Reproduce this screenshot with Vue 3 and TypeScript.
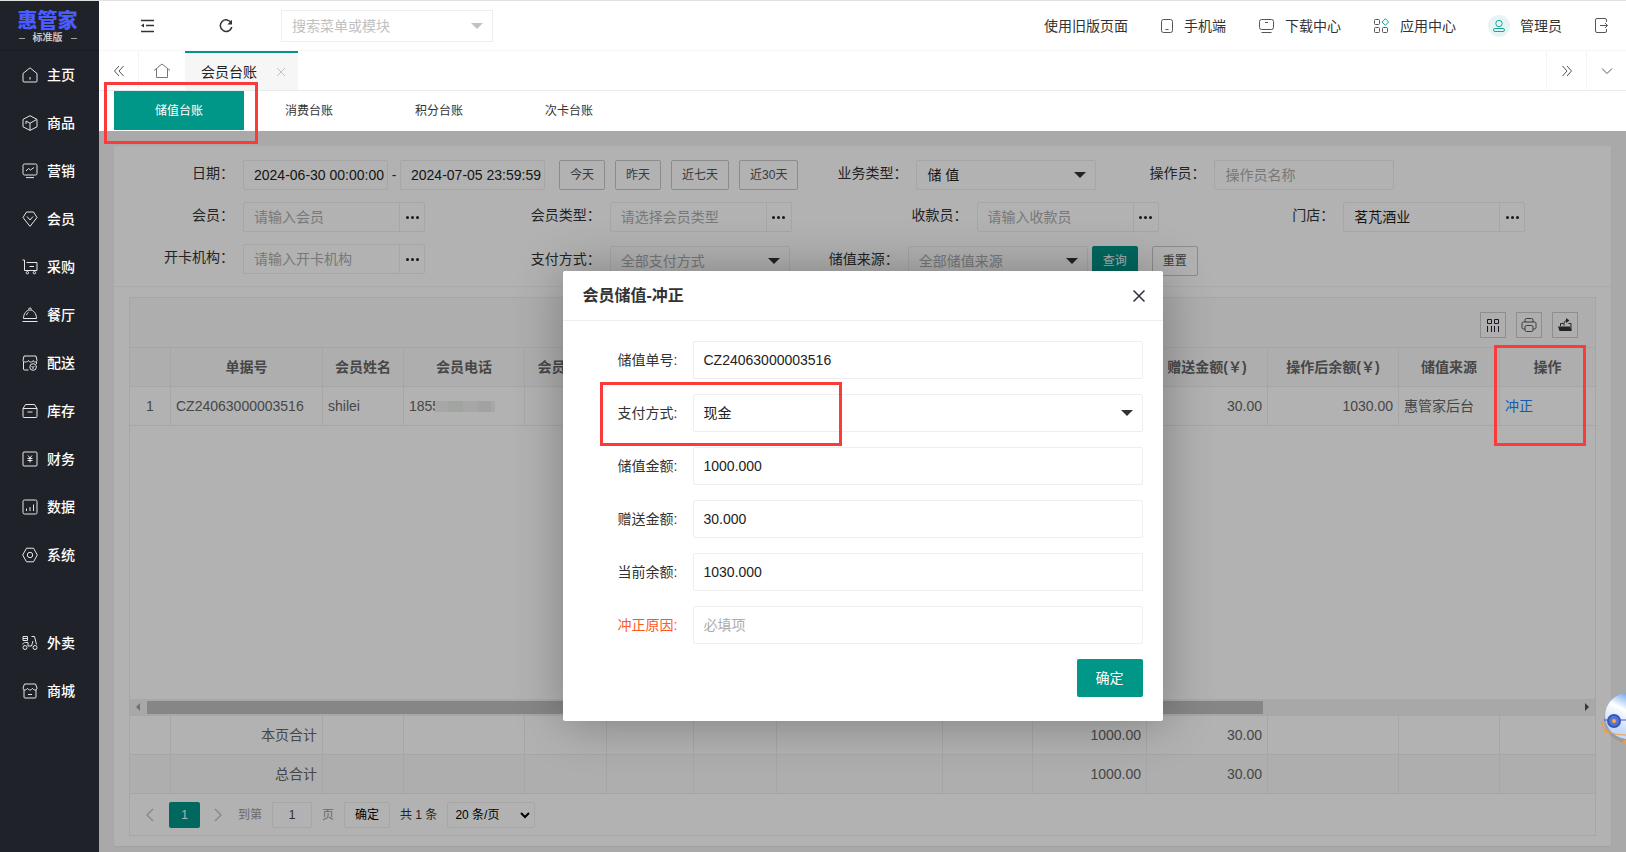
<script setup lang="ts">
import { ref } from 'vue'

interface MenuItem {
  label: string
  paths: string[]
}

const menu: MenuItem[] = [
  { label: '主页', paths: ['M1 6.5 8 .8l7 5.7V14a1 1 0 0 1-1 1H2a1 1 0 0 1-1-1Z', 'M8 10v2.6'] },
  { label: '商品', paths: ['M8 .7 15 4.4v7.4L8 15.4 1 11.8V4.4Z', 'M4 6l4 2.2L14.500 4.600M8 8.200v7M4 6v3'] },
  { label: '营销', paths: ['M2.500 1h11A1.500 1.500 0 0 1 15 2.500v8a1.500 1.500 0 0 1-1.500 1.500h-11A1.500 1.500 0 0 1 1 10.500v-8A1.500 1.500 0 0 1 2.500 1Z', 'M4 8l2.500-2.500 2 1.500L12 4.500M4 14.600h8'] },
  { label: '会员', paths: ['M4.500 1h7L15 6.500 8 15.400 1 6.500Z', 'M5 5.500 8 9l3-3.500'] },
  { label: '采购', paths: ['M.5 1h2v10.500h12.500', 'M4.500 3.500h10.500v8M7.500 7.500h4.500', 'M4.200 13.700a1.200 1.200 0 1 0 2.400 0 1.200 1.200 0 1 0-2.400 0M11.200 13.700a1.200 1.200 0 1 0 2.400 0 1.200 1.200 0 1 0-2.400 0'] },
  { label: '餐厅', paths: ['M1.500 11.500C1.500 6.500 4.500 3 8 3s6.500 3.500 6.500 8.500Z', 'M6.500 2.500a1.500 1.500 0 0 1 3 0M4.500 8c.4-1.300 1-2.200 2-2.700M.5 14.500h15'] },
  { label: '配送', paths: ['M1.500 6.500V14a1 1 0 0 0 1 1h4', 'M2 1h12l1 4.500c0 1-1 1.500-2 1.500s-1.700-.7-1.700-1.500c0 .8-1 1.500-1.700 1.500h-1C7.500 7 6.500 6.300 6.500 5.500 6.500 6.300 4.500 7 3.500 7S1 6.500 1 5.500ZM14.500 7v2', 'M7.800 12a3.300 3.300 0 1 0 6.600 0 3.300 3.300 0 1 0-6.600 0M9.500 11l1.500 1.500 1.500-1.500M11 12.500V14'] },
  { label: '库存', paths: ['M1 5.500 3.500 1.500h9L15 5.500', 'M1 5.500h14v8a1 1 0 0 1-1 1H2a1 1 0 0 1-1-1ZM5.500 9h5'] },
  { label: '财务', paths: ['M2 1h12a1 1 0 0 1 1 1v12a1 1 0 0 1-1 1H2a1 1 0 0 1-1-1V2a1 1 0 0 1 1-1Z', 'M6 4.500l2 2.500 2-2.500M8 7v4.500M5.500 7.500h5M5.500 9.500h5'] },
  { label: '数据', paths: ['M2.500 1h11A1.500 1.500 0 0 1 15 2.500v11a1.500 1.500 0 0 1-1.500 1.500h-11A1.500 1.500 0 0 1 1 13.500v-11A1.500 1.500 0 0 1 2.500 1Z', 'M4.500 12v-2.500M8 12V8M11.500 12V5.500'] },
  { label: '系统', paths: ['M4.500 1.200h7L15.300 8l-3.800 6.800h-7L.7 8Z', 'M5.300 8a2.700 2.700 0 1 0 5.400 0 2.700 2.700 0 1 0-5.400 0'] },
]

const extraMenu: MenuItem[] = [
  { label: '外卖', paths: ['M1 1.500h4.500v4H1ZM1 3.500h4.500M9.500 1.500h3l2 8', 'M.8 9.500C.8 8 2 7.500 3.500 7.500H6V11h3.500l1.500-5', 'M1 12.500a2 2 0 1 0 4 0 2 2 0 1 0-4 0M11 12.500a2 2 0 1 0 4 0 2 2 0 1 0-4 0'] },
  { label: '商城', paths: ['M2 6.500V14a1 1 0 0 0 1 1h10a1 1 0 0 0 1-1V6.500', 'M2.500 1h11L15 5c0 1.300-.9 2-2 2s-2-.7-2.500-1.700C10 6.300 9 7 8 7s-2-.7-2.500-1.700C5 6.300 4.100 7 3 7S1 6.300 1 5ZM6 11.500h4'] },
]

const ledgers = ['储值台账', '消费台账', '积分台账', '次卡台账']
const activeLedger = ref(0)
const ranges = ['今天', '昨天', '近七天', '近30天']

const columns = ['', '单据号', '会员姓名', '会员电话', '会员类型', '', '', '', '', '', '赠送金额(￥)', '操作后余额(￥)', '储值来源', '操作']
const totals = ['本页合计', '总合计']

const dateFrom = ref('2024-06-30 00:00:00')
const dateTo = ref('2024-07-05 23:59:59')
const store = ref('茗芃酒业')

const form = ref({
  no: 'CZ24063000003516',
  pay: '现金',
  amount: '1000.000',
  gift: '30.000',
  balance: '1030.000',
  reason: '',
})
</script>

<template>
  <div class="app">
    <aside class="side">
      <div class="logo">
        <strong>惠管家</strong>
        <small>标准版</small>
      </div>
      <nav>
        <a v-for="m in menu" :key="m.label" href="#" class="menu-item">
          <svg viewBox="0 0 16 16"><path v-for="p in m.paths" :key="p" :d="p" /></svg>{{ m.label }}
        </a>
      </nav>
      <nav class="extra">
        <a v-for="m in extraMenu" :key="m.label" href="#" class="menu-item">
          <svg viewBox="0 0 16 16"><path v-for="p in m.paths" :key="p" :d="p" /></svg>{{ m.label }}
        </a>
      </nav>
    </aside>

    <div class="main">
      <header class="top">
        <button class="ico fold" aria-label="收起菜单">
          <svg width="15" height="14" viewBox="0 0 15 14" class="dark"><path d="M1 1.500h13M6 6.500h8M1 12.500h13" /><path d="M4 4.500v4L1 6.500Z" class="solid" /></svg>
        </button>
        <button class="ico reload" aria-label="刷新">
          <svg width="14" height="14" viewBox="0 0 14 14" class="dark"><path d="M12.300 4A5.800 5.800 0 1 0 12.800 8" /><path d="M13 .8v4.700H8.300Z" class="solid" /></svg>
        </button>
        <label class="search">
          <input type="text" placeholder="搜索菜单或模块" aria-label="搜索菜单或模块" />
          <i class="caret"></i>
        </label>
        <nav class="links">
          <a href="#">使用旧版页面</a>
          <a href="#"><svg width="14" height="16" viewBox="0 0 14 16"><rect x="1.500" y="1.500" width="11" height="13" rx="2" /><path d="M5.500 11.500h3" /></svg>手机端</a>
          <a href="#"><svg width="17" height="16" viewBox="0 0 17 16"><rect x="1.500" y="1.500" width="14" height="10" rx="2" /><path d="M7 4.500h3M3.500 14.500h10" /></svg>下载中心</a>
          <a href="#"><svg width="17" height="16" viewBox="0 0 17 16"><rect x="1.500" y="1.500" width="5" height="5" rx="1" /><rect x="1.500" y="9.500" width="5" height="5" rx="1" /><rect x="9.500" y="9.500" width="5" height="5" rx="1" /><path d="M12.300.6 15.600 4l-3.300 3.400L9 4Z" class="teal" /></svg>应用中心</a>
          <a href="#"><span class="avatar"><svg width="14" height="14" viewBox="0 0 14 14"><circle cx="7" cy="4.500" r="3.200" class="teal" /><rect x="1.500" y="9.500" width="11" height="3" rx="1.500" class="teal" /></svg></span>管理员</a>
          <a href="#" aria-label="退出"><svg width="15" height="17" viewBox="0 0 15 17"><path d="M12.500 5V3a1.500 1.500 0 0 0-1.500-1.500H3A1.500 1.500 0 0 0 1.500 3v11A1.500 1.500 0 0 0 3 15.500h8a1.500 1.500 0 0 0 1.500-1.500V12M6 8.500h7.500M11 6l2.500 2.500L11 11" /></svg></a>
        </nav>
      </header>

      <div class="tabs">
        <button class="tab-btn first" aria-label="向左">
          <svg width="12" height="12" viewBox="0 0 12 12"><path d="M6 1 1.500 6 6 11M10.500 1 6 6l4.500 5" /></svg>
        </button>
        <button class="tab-btn home" aria-label="首页">
          <svg width="18" height="16" viewBox="0 0 18 16"><path d="M1 7.500 9 1l8 6.500M3.500 6v8.500h11V6" /></svg>
        </button>
        <a href="#" class="tab-active">会员台账
          <svg width="10" height="10" viewBox="0 0 10 10"><path d="M1 1l8 8M9 1 1 9" /></svg>
        </a>
        <button class="tab-btn next" aria-label="向右">
          <svg width="12" height="12" viewBox="0 0 12 12"><path d="M1.500 1 6 6l-4.500 5M6 1l4.500 5L6 11" /></svg>
        </button>
        <button class="tab-btn" aria-label="更多">
          <svg width="12" height="8" viewBox="0 0 12 8"><path d="M1 1.500 6 6.500l5-5" /></svg>
        </button>
      </div>

      <div class="ledgers">
        <button v-for="(l, i) in ledgers" :key="l" :class="{ on: i === activeLedger }" @click="activeLedger = i">{{ l }}</button>
      </div>

      <section class="content">
        <div class="card">
          <form class="filters" @submit.prevent>
            <div class="line">
              <div class="field">
                <label for="from">日期：</label>
                <input id="from" v-model="dateFrom" class="box date" type="text" />
                <span class="dash">-</span>
                <input v-model="dateTo" class="box date" type="text" aria-label="结束日期" />
                <div class="ranges">
                  <button v-for="r in ranges" :key="r" class="btn" type="button">{{ r }}</button>
                </div>
              </div>
              <div class="field">
                <label for="biz">业务类型：</label>
                <div class="pick"><select id="biz" class="box"><option>储 值</option></select><i class="caret"></i></div>
              </div>
              <div class="field">
                <label for="op">操作员：</label>
                <input id="op" class="box wide" type="text" placeholder="操作员名称" />
              </div>
            </div>
            <div class="line quarters">
              <div class="field quarter">
                <label for="member">会员：</label>
                <div class="combo"><input id="member" type="text" placeholder="请输入会员" /><button type="button" aria-label="选择会员"><i></i><i></i><i></i></button></div>
              </div>
              <div class="field quarter">
                <label for="mtype">会员类型：</label>
                <div class="combo"><input id="mtype" type="text" placeholder="请选择会员类型" /><button type="button" aria-label="选择会员类型"><i></i><i></i><i></i></button></div>
              </div>
              <div class="field quarter">
                <label for="cashier">收款员：</label>
                <div class="combo"><input id="cashier" type="text" placeholder="请输入收款员" /><button type="button" aria-label="选择收款员"><i></i><i></i><i></i></button></div>
              </div>
              <div class="field quarter">
                <label for="store">门店：</label>
                <div class="combo"><input id="store" v-model="store" type="text" /><button type="button" aria-label="选择门店"><i></i><i></i><i></i></button></div>
              </div>
            </div>
            <div class="line quarters">
              <div class="field quarter">
                <label for="org">开卡机构：</label>
                <div class="combo"><input id="org" type="text" placeholder="请输入开卡机构" /><button type="button" aria-label="选择开卡机构"><i></i><i></i><i></i></button></div>
              </div>
              <div class="line lower">
                <div class="field">
                  <label for="payq">支付方式：</label>
                  <div class="pick"><select id="payq" class="box empty"><option>全部支付方式</option></select><i class="caret"></i></div>
                </div>
                <div class="field">
                  <label for="src">储值来源：</label>
                  <div class="pick"><select id="src" class="box empty"><option>全部储值来源</option></select><i class="caret"></i></div>
                </div>
                <div class="actions">
                  <button class="btn primary" type="submit">查询</button>
                  <button class="btn" type="reset">重置</button>
                </div>
              </div>
            </div>
          </form>

          <div class="grid">
            <div class="tools">
              <button aria-label="筛选列"><svg width="16" height="16" viewBox="0 0 16 16" class="cols"><path d="M2.500 2.500h4v4h-4ZM9.500 2.500h4v4h-4ZM2.500 9v6M6.500 9v6M9.500 9v6M13.500 9v6" /></svg></button>
              <button aria-label="打印"><svg width="16" height="16" viewBox="0 0 16 16"><path d="M4 5V3a1.500 1.500 0 0 1 1.500-1.500h5A1.500 1.500 0 0 1 12 3v2M4 12H2.500A1.500 1.500 0 0 1 1 10.500v-4A1.500 1.500 0 0 1 2.500 5h11A1.500 1.500 0 0 1 15 6.500v4a1.500 1.500 0 0 1-1.500 1.500H12" /><rect x="4" y="8.500" width="8" height="6" rx="1.500" /></svg></button>
              <button aria-label="导出"><svg width="16" height="16" viewBox="0 0 16 16" class="dark"><path d="M1 9.500h12l1.500 4.500H2.500Z" class="solid" /><path d="M3.500 9V6.500h3M11.500 6.500h2.500V14M7 8.500c-.3-3 .5-5 3-5" /><path d="M9 1l3.500 2.500L9 6Z" class="solid" /></svg></button>
            </div>
            <table class="tbl">
              <colgroup><col v-for="(c, i) in columns" :key="i" :class="'c' + i" /></colgroup>
              <thead>
                <tr><th v-for="(c, i) in columns" :key="i">{{ c }}</th></tr>
              </thead>
              <tbody>
                <tr>
                  <td class="mid">1</td>
                  <td>CZ24063000003516</td>
                  <td>shilei</td>
                  <td><span class="phone">1855<i class="mosaic"></i></span></td>
                  <td></td><td></td><td></td><td></td><td></td>
                  <td class="num">1000.00</td>
                  <td class="num">30.00</td>
                  <td class="num">1030.00</td>
                  <td>惠管家后台</td>
                  <td><a href="#">冲正</a></td>
                </tr>
              </tbody>
            </table>
            <div class="blank"></div>
            <div class="scroll"><i class="arrow left"></i><div class="track"><div class="thumb"></div></div><i class="arrow right"></i></div>
            <table class="tbl sums">
              <colgroup><col v-for="(c, i) in columns" :key="i" :class="'c' + i" /></colgroup>
              <tbody>
                <tr v-for="t in totals" :key="t">
                  <td></td>
                  <td class="num">{{ t }}</td>
                  <td v-for="n in 7" :key="n"></td>
                  <td class="num">1000.00</td>
                  <td class="num">30.00</td>
                  <td></td><td></td><td></td>
                </tr>
              </tbody>
            </table>
            <div class="pager">
              <button class="step" aria-label="上一页"><svg width="8" height="14" viewBox="0 0 8 14"><path d="M7 1 1 7l6 6" /></svg></button>
              <button class="cur">1</button>
              <button class="step" aria-label="下一页"><svg width="8" height="14" viewBox="0 0 8 14"><path d="M1 1l6 6-6 6" /></svg></button>
              <label class="goto">到第<input type="text" value="1" />页</label>
              <button class="ok">确定</button>
              <span class="count">共 1 条</span>
              <div class="size"><select aria-label="每页条数"><option>20 条/页</option></select><svg width="10" height="7" viewBox="0 0 10 7"><path d="M1 1l4 4 4-4" /></svg></div>
            </div>
          </div>
        </div>

        <div class="mask">
          <div class="modal" role="dialog" aria-labelledby="dlg">
            <div class="modal-head">
              <h2 id="dlg">会员储值-冲正</h2>
              <button aria-label="关闭"><svg width="12" height="12" viewBox="0 0 12 12"><path d="M.5.5l11 11M11.500.5l-11 11" /></svg></button>
            </div>
            <form class="modal-body" @submit.prevent>
              <div class="row"><label for="f1">储值单号:</label><input id="f1" v-model="form.no" type="text" /></div>
              <div class="row">
                <label for="f2">支付方式:</label>
                <div class="pick"><select id="f2" v-model="form.pay"><option>现金</option></select><i class="caret"></i></div>
              </div>
              <div class="row"><label for="f3">储值金额:</label><input id="f3" v-model="form.amount" type="text" /></div>
              <div class="row"><label for="f4">赠送金额:</label><input id="f4" v-model="form.gift" type="text" /></div>
              <div class="row"><label for="f5">当前余额:</label><input id="f5" v-model="form.balance" type="text" /></div>
              <div class="row need"><label for="f6">冲正原因:</label><input id="f6" v-model="form.reason" type="text" placeholder="必填项" /></div>
              <button class="confirm" type="submit">确定</button>
            </form>
            <div class="mark mark-pay"></div>
          </div>
        </div>
      </section>
    </div>

    <div class="mark mark-tab"></div>
    <div class="mark mark-op"></div>
    <svg class="robot" width="26" height="54" viewBox="0 0 26 54">
      <defs>
        <linearGradient id="shell" x1="0.700" y1="0" x2="0.300" y2="0.800">
          <stop offset="0.100" stop-color="#6ba2ec" /><stop offset="0.500" stop-color="#ffffff" /><stop offset="1" stop-color="#c3dbf8" />
        </linearGradient>
      </defs>
      <ellipse cx="28" cy="29" rx="24" ry="24" fill="#6c7896" opacity="0.300" />
      <circle cx="28" cy="26" r="23" fill="url(#shell)" />
      <path d="M4 30h22" stroke="#3c55b4" />
      <circle cx="14" cy="31" r="7" fill="#3c55b4" />
      <circle cx="14" cy="31" r="5" fill="#5675d8" />
      <circle cx="14" cy="31" r="2" fill="#ffab45" />
      <path d="M2 31c0 6 2 9 5 10 6 3 12 4 19 4" stroke="#f79a3c" />
      <path d="M9 43c2 6 9 9 17 10" stroke="#f79a3c" opacity="0.500" />
      <circle cx="6" cy="41" r="2" fill="#f79a3c" /><circle cx="25" cy="52" r="2" fill="#f79a3c" />
    </svg>
  </div>
</template>

<style>
body {
  margin: 0;
}
</style>

<style scoped>
* {
  box-sizing: border-box;
}
.app {
  position: relative;
  display: flex;
  min-height: 100vh;
  border-top: 1px solid #e0e0e0;
  overflow: hidden;
  background: #f2f2f2;
  color: #333;
  font: 14px/20px 'Liberation Sans', 'Noto Sans CJK SC', sans-serif;
}
button,
input,
select {
  margin: 0;
  padding: 0;
  border: 0;
  background: none;
  color: inherit;
  font: inherit;
  appearance: none;
  border-radius: 0;
  outline: 0;
}
a {
  color: inherit;
  text-decoration: none;
}
svg {
  display: block;
  flex: none;
  fill: none;
  stroke: #555;
}
.dark {
  stroke: #333;
  stroke-width: 1.5;
}
.dark .solid {
  fill: #333;
  stroke: none;
}
.teal {
  stroke: #14a89a;
}
.caret {
  width: 0;
  height: 0;
  border: 6px solid transparent;
  border-top-color: #333;
  border-bottom-width: 0;
}

/* sidebar */
.side {
  flex: none;
  width: 99px;
  background: #20222a;
  color: #fff;
}
.logo {
  display: flex;
  flex-direction: column;
  align-items: center;
  height: 50px;
  padding: 10px 4px 0 0;
  border-bottom: 1px solid #1b1d24;
}
.logo strong {
  color: #4a5cff;
  font-size: 20px;
  font-weight: 900;
  line-height: 20px;
}
.logo small {
  display: flex;
  align-items: center;
  gap: 8px;
  color: #c4c4c8;
  font-size: 10px;
  font-weight: 700;
  line-height: 14px;
}
.logo small::before,
.logo small::after {
  content: '';
  width: 6px;
  height: 1px;
  background: #a0a0a5;
}
.menu-item {
  display: flex;
  align-items: center;
  gap: 9px;
  height: 48px;
  padding-left: 22px;
  font-weight: 500;
}
.menu-item svg {
  width: 16px;
  height: 16px;
  stroke: #e6e6e8;
}
.extra {
  margin-top: 40px;
}

/* header */
.main {
  display: flex;
  flex: 1;
  flex-direction: column;
  min-width: 0;
}
.top {
  display: flex;
  align-items: center;
  height: 50px;
  border-bottom: 1px solid #f6f6f6;
  background: #fff;
}
.fold {
  margin-left: 41px;
}
.reload {
  margin: 0 48px 0 64px;
}
.search {
  position: relative;
  width: 212px;
}
.search input {
  width: 100%;
  height: 32px;
  padding: 0 10px;
  border: 1px solid #eee;
}
.search input::placeholder {
  color: #c0c0c0;
}
.search .caret {
  position: absolute;
  top: 13px;
  right: 10px;
  border-top-color: #c2c2c2;
}
.links {
  display: flex;
  align-items: center;
  gap: 32px;
  margin-left: auto;
  padding-right: 17px;
}
.links a {
  display: flex;
  align-items: center;
  gap: 10px;
}
.avatar {
  display: flex;
  align-items: center;
  justify-content: center;
  width: 22px;
  height: 22px;
  border-radius: 50%;
  background: #e6f5f3;
}

/* page tabs */
.tabs {
  display: flex;
  height: 40px;
  border-bottom: 1px solid #eaeaea;
  background: #fff;
}
.tab-btn {
  display: flex;
  align-items: center;
  justify-content: center;
  width: 40px;
  border-left: 1px solid #f4f4f4;
}
.tab-btn.first {
  width: 39px;
  border-left: 0;
}
.tab-btn.home {
  width: 47px;
}
.tab-btn.home svg {
  stroke: #777;
}
.tab-btn.next {
  margin-left: auto;
}
.tab-active {
  display: flex;
  align-items: center;
  gap: 19px;
  padding: 0 12px 0 16px;
  border-top: 2px solid #009688;
  background: #f6f6f6;
  color: #222;
}
.tab-active svg {
  stroke: #c2c2c2;
}

/* ledger tabs */
.ledgers {
  display: flex;
  height: 40px;
  padding: 0 0 1px 15px;
  background: #fff;
}
.ledgers button {
  width: 130px;
  font-size: 12px;
}
.ledgers .on {
  background: #009688;
  color: #fff;
}

/* content */
.content {
  position: relative;
  display: flex;
  flex: 1;
  flex-direction: column;
  padding: 15px 15px 6px;
}
.card {
  display: flex;
  flex: 1;
  flex-direction: column;
  border-radius: 2px;
  background: #fff;
  box-shadow: 0 1px 2px rgba(0, 0, 0, 0.05);
}
.filters {
  display: flex;
  flex-direction: column;
  gap: 12px;
  padding: 14px 15px 10px;
  border-bottom: 1px solid #f2f2f2;
}
.line {
  display: flex;
  gap: 4px;
}
.quarters {
  gap: 0;
}
.lower {
  padding-top: 2px;
}
.field {
  display: flex;
}
.quarter {
  flex: 0 0 25%;
}
.field label {
  width: 105px;
  margin-right: 9px;
  line-height: 27px;
  text-align: right;
  white-space: nowrap;
}
.box {
  height: 30px;
  padding: 0 10px;
  border: 1px solid #eee;
  border-radius: 2px;
  color: #222;
}
.date {
  width: 145px;
  padding-right: 0;
}
.dash {
  width: 12px;
  line-height: 30px;
  text-align: center;
}
.wide {
  width: 180px;
}
.ranges {
  display: flex;
  gap: 10px;
  margin-left: 14px;
}
.btn {
  height: 30px;
  padding: 0 10px;
  border: 1px solid #c9c9c9;
  border-radius: 2px;
  color: #555;
  font-size: 12px;
}
.btn.primary {
  border-color: #009688;
  background: #009688;
  color: #fff;
}
.actions {
  display: flex;
  gap: 14px;
}
.pick {
  position: relative;
}
.pick select {
  width: 180px;
}
.pick .caret {
  position: absolute;
  top: 50%;
  right: 10px;
  margin-top: -3px;
  pointer-events: none;
}
.empty,
input::placeholder {
  color: #adadad;
  opacity: 1;
}
.combo {
  display: flex;
  width: 182px;
  height: 30px;
  border: 1px solid #eee;
  border-radius: 2px;
}
.combo input {
  flex: 1;
  min-width: 0;
  padding-left: 10px;
  color: #222;
}
.combo button {
  display: flex;
  align-items: center;
  justify-content: center;
  gap: 2px;
  width: 25px;
  border-left: 1px solid #eee;
}
.combo i {
  width: 3px;
  height: 3px;
  border-radius: 50%;
  background: #222;
}

/* grid */
.grid {
  display: flex;
  flex: 1;
  flex-direction: column;
  margin: 10px 15px;
  border: 1px solid #eee;
  color: #666;
}
.tools {
  display: flex;
  justify-content: flex-end;
  gap: 10px;
  height: 50px;
  padding: 14px 17px 0 0;
  border-bottom: 1px solid #eee;
  background: #fafafa;
}
.tools button {
  display: flex;
  align-items: center;
  justify-content: center;
  width: 26px;
  height: 26px;
  border: 1px solid #ccc;
}
.tools .cols {
  stroke: #2d1a33;
}
.tools .dark {
  stroke-width: 1;
}
.tbl {
  width: 100%;
  border-collapse: separate;
  border-spacing: 0;
  table-layout: fixed;
}
.tbl th,
.tbl td {
  height: 39px;
  padding: 0 5px;
  border: solid #eee;
  border-width: 0 1px 1px 0;
  overflow: hidden;
  font-weight: 400;
  text-align: left;
  white-space: nowrap;
}
.tbl tr > :last-child {
  border-right: 0;
}
.tbl th {
  background: #fafafa;
  font-weight: 700;
  text-align: center;
}
.tbl .num {
  text-align: right;
}
.tbl .mid {
  text-align: center;
}
.tbl a {
  color: #1e82ff;
}
.sums tr:last-child td {
  background: #f9f9f9;
}
.c0 { width: 41px; }
.c1 { width: 152px; }
.c2 { width: 81px; }
.c3 { width: 121px; }
.c4 { width: 82px; }
.c5 { width: 87px; }
.c6 { width: 83px; }
.c7 { width: 166px; }
.c8 { width: 90px; }
.c9 { width: 114px; }
.c10 { width: 121px; }
.c11 { width: 131px; }
.c12 { width: 101px; }
.phone {
  position: relative;
}
.mosaic {
  position: absolute;
  top: 3px;
  left: 26px;
  width: 60px;
  height: 11px;
  background: linear-gradient(90deg, #f0f0f0 0 13px, #e9ebe7 13px 28px, #efefef 28px 42px, #e8e9e8 42px 56px, #efefef 56px);
}
.blank {
  flex: 1;
}
.scroll {
  display: flex;
  align-items: center;
  height: 17px;
  border-bottom: 1px solid #eee;
  background: #f1f1f1;
}
.track {
  flex: 1;
}
.thumb {
  width: 78%;
  height: 13px;
  background: #c1c1c1;
}
.arrow {
  width: 17px;
  height: 8px;
  background: #a3a3a3;
  clip-path: polygon(6px 4px, 10px 0, 10px 8px);
}
.arrow.right {
  background: #505050;
  clip-path: polygon(11px 4px, 7px 0, 7px 8px);
}
.pager {
  display: flex;
  align-items: center;
  height: 41px;
  padding-left: 16px;
  font-size: 12px;
}
.pager > * {
  flex: none;
}
.pager svg {
  stroke: #c4c4c4;
  stroke-width: 1.5;
}
.cur {
  width: 31px;
  height: 26px;
  margin: 0 14px 0 15px;
  border-radius: 2px;
  background: #009688;
  color: #fff;
}
.goto {
  display: flex;
  align-items: center;
  gap: 10px;
  margin: 0 10px 0 16px;
  color: #999;
}
.goto input {
  width: 40px;
  height: 26px;
  border: 1px solid #eee;
  border-radius: 2px;
  color: #444;
  text-align: center;
}
.ok {
  width: 46px;
  height: 26px;
  border: 1px solid #eee;
  border-radius: 2px;
  color: #000;
}
.count {
  margin: 0 10px;
  color: #333;
}
.size {
  position: relative;
}
.size select {
  width: 88px;
  height: 26px;
  padding-left: 7px;
  border: 1px solid #eee;
  border-radius: 2px;
  color: #000;
}
.size svg {
  position: absolute;
  top: 10px;
  right: 5px;
  stroke: #000;
  stroke-width: 2;
}

/* dialog */
.mask {
  position: absolute;
  inset: 0;
  z-index: 10;
  padding-top: 140px;
  background: rgba(0, 0, 0, 0.3);
}
.modal {
  position: relative;
  width: 600px;
  margin: 0 auto;
  border-radius: 2px;
  background: #fff;
  box-shadow: 1px 1px 50px rgba(0, 0, 0, 0.3);
}
.modal-head {
  display: flex;
  align-items: center;
  justify-content: space-between;
  height: 50px;
  padding: 0 18px 0 20px;
  border-bottom: 1px solid #eee;
}
.modal-head h2 {
  margin: 0;
  font-size: 16px;
  font-weight: 700;
}
.modal-head svg {
  stroke: #2e2d3c;
  stroke-width: 1.5;
}
.modal-body {
  display: flex;
  flex-direction: column;
  gap: 15px;
  padding: 20px 20px 24px 45px;
}
.row {
  display: flex;
  align-items: center;
}
.row label {
  width: 70px;
  margin-right: 15px;
  text-align: right;
}
.row input,
.row select {
  width: 100%;
  height: 38px;
  padding: 0 10px;
  border: 1px solid #eee;
  border-radius: 2px;
  color: #222;
}
.row > input,
.row .pick {
  flex: 1;
}
.need label {
  color: #ff5722;
}
.confirm {
  align-self: flex-end;
  width: 66px;
  height: 38px;
  border-radius: 2px;
  background: #009688;
  color: #fff;
}

/* highlight frames */
.mark {
  position: absolute;
  z-index: 20;
  border: 3px solid #fb3b39;
  pointer-events: none;
}
.mark-tab {
  top: 81px;
  left: 104px;
  width: 154px;
  height: 62px;
}
.mark-op {
  top: 344px;
  right: 40px;
  width: 92px;
  height: 101px;
}
.mark-pay {
  top: 111px;
  left: 37px;
  width: 242px;
  height: 64px;
}
.robot {
  position: absolute;
  top: 689px;
  right: 0;
  z-index: 20;
  stroke: none;
}
</style>
